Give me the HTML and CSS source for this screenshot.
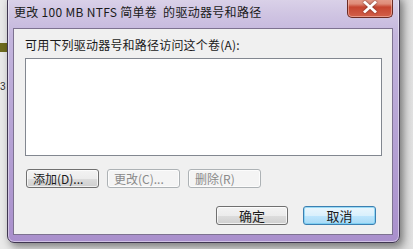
FILE: index.html
```html
<!DOCTYPE html>
<html lang="zh-CN">
<head>
<meta charset="utf-8">
<title>更改驱动器号和路径</title>
<link rel="stylesheet" href="styles.css">
</head>
<body>
<div class="desktop">
  <div class="desk-band"></div>
  <div class="desk-glyph">3</div>
  <div class="window">
    <div class="titlebar">更改 100 MB NTFS 简单卷 &nbsp;的驱动器号和路径</div>
    <div class="close">
      <svg width="16" height="12" viewBox="0 0 16 12"><path d="M3 1.5 L13 10.5 M13 1.5 L3 10.5" stroke="#ffffff" stroke-width="2.8" stroke-linecap="square"/></svg>
    </div>
    <div class="content">
      <div class="label">可用下列驱动器号和路径访问这个卷(A):</div>
      <div class="listbox"></div>
      <div class="row">
        <div class="btn">添加(D)...</div>
        <div class="btn disabled">更改(C)...</div>
        <div class="btn disabled">删除(R)</div>
      </div>
      <div class="row end">
        <div class="btn big">确定</div>
        <div class="btn big focus">取消</div>
      </div>
    </div>
  </div>
</div>
</body>
</html>
```

FILE: styles.css
```css
html, body {
  margin: 0;
  padding: 0;
}
body {
  font-family: "Noto Sans CJK SC", "Liberation Sans", sans-serif;
  font-size: 12px;
}
.desktop {
  position: relative;
  width: 413px;
  height: 249px;
  overflow: hidden;
  background: linear-gradient(90deg, #e9e9e9 0, #e9e9e9 7px, #d6d6d6 400px, #e2e2e2 413px);
}
.desk-band {
  position: absolute;
  left: 0;
  top: 43px;
  width: 8px;
  height: 9px;
  background: #6e6b1e;
}
.desk-glyph {
  position: absolute;
  left: 0;
  top: 81px;
  font-family: "Liberation Sans", sans-serif;
  font-size: 10px;
  line-height: 12px;
  color: #333;
}
.window {
  position: absolute;
  left: 7px;
  top: -6px;
  width: 393px;
  height: 249px;
  border: 1px solid #3f3650;
  border-radius: 7px;
  padding: 0 6px 7px 5px;
  box-sizing: border-box;
  display: flex;
  flex-direction: column;
  background: linear-gradient(180deg, #ddd5ea 0, #cfc4e2 20px, #c4b6dd 40px, #b8a6d6 120px, #a98fcc 249px);
  box-shadow: 3px 4px 8px rgba(0, 0, 0, 0.45), inset 0 0 0 1px rgba(255, 255, 255, 0.45);
}
.titlebar {
  height: 33px;
  box-sizing: border-box;
  padding: 9px 0 0 1px;
  line-height: 16px;
  letter-spacing: 0.3px;
  color: #1a1a1a;
  white-space: nowrap;
}
.close {
  position: absolute;
  right: 6px;
  top: 0;
  width: 46px;
  height: 23px;
  box-sizing: border-box;
  border: 1px solid #6b2b24;
  border-top: none;
  border-radius: 0 0 5px 5px;
  background: linear-gradient(180deg, #e9ab9c 0, #df8c79 40%, #c64530 55%, #d2604a 100%);
  box-shadow: inset 0 0 0 1px rgba(255, 210, 200, 0.5);
  display: flex;
  align-items: flex-end;
  justify-content: center;
  padding-bottom: 4px;
}
.close svg {
  filter: drop-shadow(0 0 1px #6b2b24);
}
.content {
  flex: 1;
  border: 1px solid #7d7290;
  background: #f0f0f0;
  padding: 8px 10px 0 11px;
  display: flex;
  flex-direction: column;
  color: #1a1a1a;
}
.label {
  line-height: 16px;
  height: 16px;
  white-space: nowrap;
  letter-spacing: 0.2px;
}
.listbox {
  margin-top: 5px;
  height: 98px;
  box-sizing: border-box;
  border: 1px solid #828790;
  background: #ffffff;
}
.row {
  display: flex;
  gap: 8px;
  margin-top: 13px;
  padding-left: 1px;
}
.row.end {
  justify-content: flex-end;
  gap: 15px;
  margin-top: 18px;
  margin-right: 6px;
}
.btn {
  width: 73px;
  height: 19px;
  box-sizing: border-box;
  border: 1px solid #707070;
  border-radius: 3px;
  background: linear-gradient(180deg, #f3f3f3 0, #ececec 50%, #dddddd 51%, #cfcfcf 100%);
  box-shadow: inset 0 0 0 1px rgba(255, 255, 255, 0.7);
  line-height: 17px;
  padding-left: 6px;
  white-space: nowrap;
  color: #1a1a1a;
}
.btn.disabled {
  border-color: #adb2b5;
  background: #f4f4f4;
  color: #8a8a8a;
}
.btn.big {
  width: 72px;
  text-align: center;
  padding-left: 0;
  font-size: 13px;
}
.btn.focus {
  width: 73px;
  border-color: #3c7fb1;
  background: linear-gradient(180deg, #eaf6fd 0, #d9f0fc 50%, #bee6fd 51%, #a7d9f5 100%);
  box-shadow: inset 0 0 0 1px rgba(100, 200, 240, 0.6);
}
```
